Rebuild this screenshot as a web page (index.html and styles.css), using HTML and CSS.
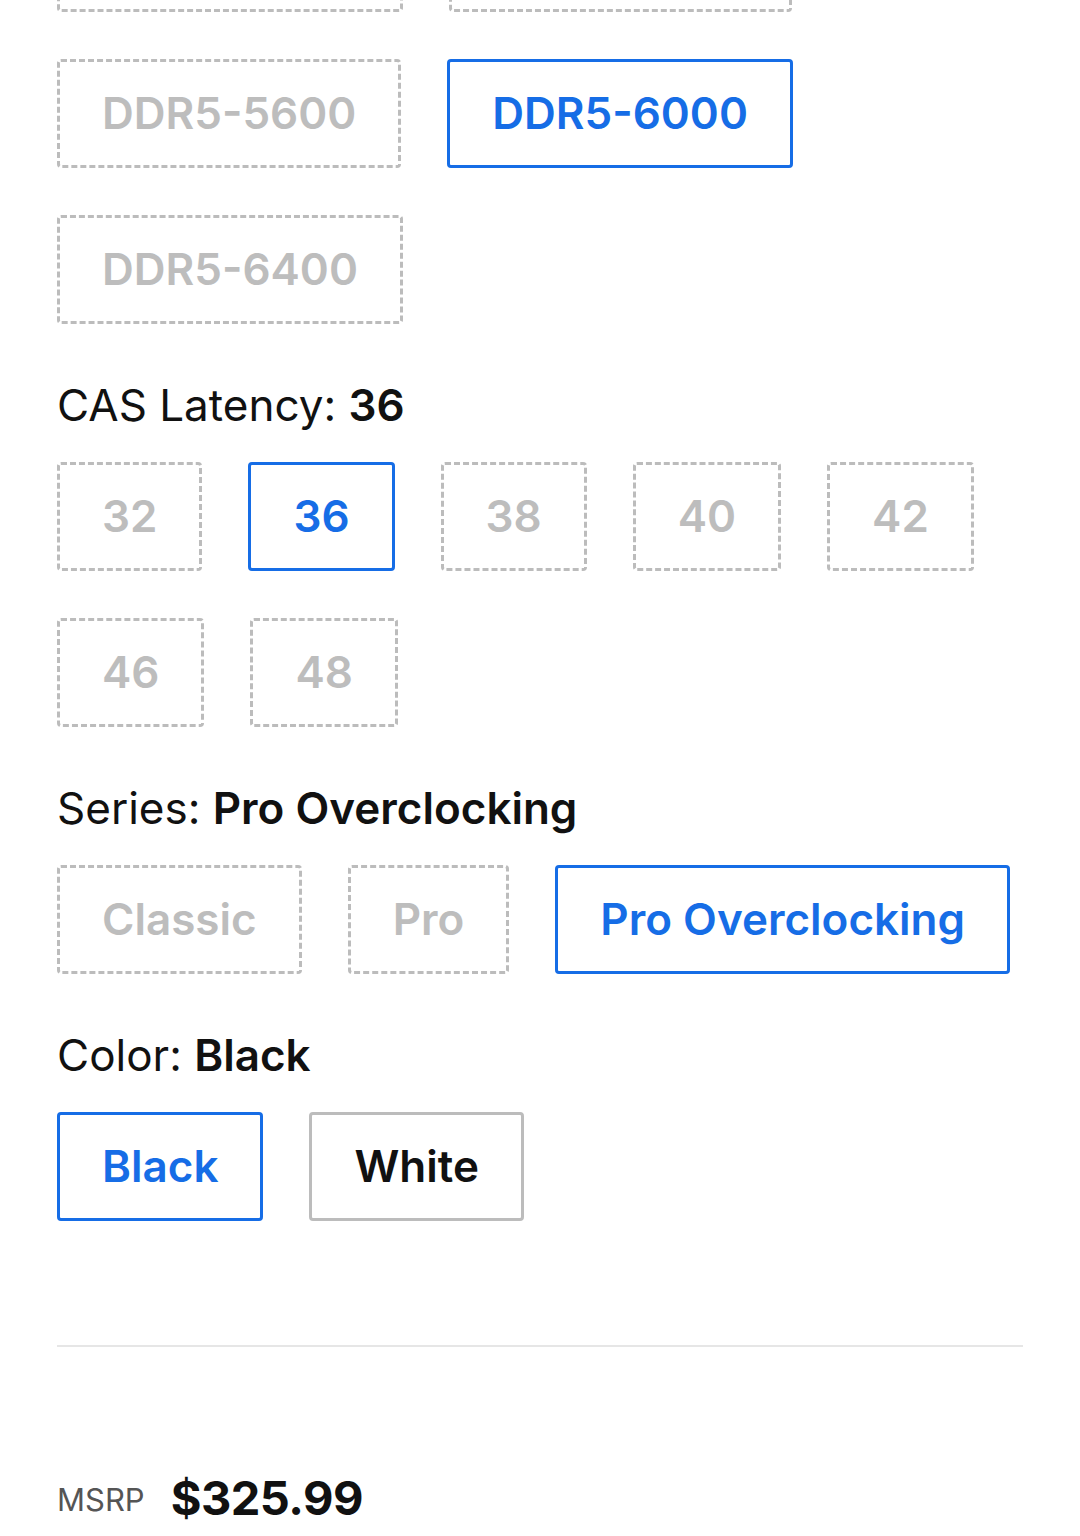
FILE: index.html
```html
<!DOCTYPE html>
<html lang="en">
<head>
  <meta charset="UTF-8" />
  <meta name="viewport" content="width=device-width, initial-scale=1.0" />
  <title>Memory Kit Options</title>
  <link rel="stylesheet" href="styles.css">
</head>
<body>
  <div class="product-options">
    <!-- Speed -->
    <div class="option-group first">
      <div class="swatches">
        <button class="swatch unavailable">DDR5-4800</button>
        <button class="swatch unavailable">DDR5-5200</button>
        <button class="swatch unavailable">DDR5-5600</button>
        <button class="swatch selected">DDR5-6000</button>
        <button class="swatch unavailable">DDR5-6400</button>
      </div>
    </div>

    <!-- CAS Latency -->
    <div class="option-group">
      <div class="option-label">CAS Latency: <strong>36</strong></div>
      <div class="swatches">
        <button class="swatch unavailable">32</button>
        <button class="swatch selected">36</button>
        <button class="swatch unavailable">38</button>
        <button class="swatch unavailable">40</button>
        <button class="swatch unavailable">42</button>
        <button class="swatch unavailable">46</button>
        <button class="swatch unavailable">48</button>
      </div>
    </div>

    <!-- Series -->
    <div class="option-group">
      <div class="option-label">Series: <strong>Pro Overclocking</strong></div>
      <div class="swatches">
        <button class="swatch unavailable">Classic</button>
        <button class="swatch unavailable">Pro</button>
        <button class="swatch selected">Pro Overclocking</button>
      </div>
    </div>

    <!-- Color -->
    <div class="option-group">
      <div class="option-label">Color: <strong>Black</strong></div>
      <div class="swatches">
        <button class="swatch selected">Black</button>
        <button class="swatch">White</button>
      </div>
    </div>

    <hr class="divider" />

    <div class="price-row">
      <span class="msrp">MSRP</span>
      <span class="price">$325.99</span>
    </div>
  </div>
</body>
</html>
```

FILE: styles.css
```css
/* Global Styles */
body {
  margin: 0;
  font-family: 'Inter', 'Liberation Sans', sans-serif;
  background: #fff;
  color: #111;
}
.product-options {
  padding: 0 57px 40px;
}
/* Option groups */
.option-group {
  margin-top: 54px;
}
.option-group.first {
  margin-top: -97px;
}
.option-label {
  font-size: 44px;
  font-weight: 400;
  margin-bottom: 30px;
}
.option-label strong {
  font-weight: 600;
}
.swatches {
  display: flex;
  flex-wrap: wrap;
  column-gap: 46px;
  row-gap: 47px;
  max-width: 966px;
}
/* Swatch buttons */
.swatch {
  font-family: inherit;
  font-size: 44px;
  font-weight: 600;
  line-height: 53px;
  padding: 25px 42px;
  background: #fff;
  color: #111;
  border: 3px solid #bcbcbc;
  border-radius: 4px;
  cursor: pointer;
}
.swatch.unavailable {
  color: #bdbdbd;
  border-style: dashed;
}
.swatch.selected {
  color: #166de6;
  border-color: #166de6;
}
/* Price */
.divider {
  border: none;
  height: 2px;
  background: #e6e6e6;
  margin: 124px 0 0;
}
.price-row {
  display: flex;
  align-items: baseline;
  gap: 26px;
  margin-top: 122px;
}
.msrp {
  font-size: 31px;
  color: #555;
  position: relative;
  top: -4px;
}
.price {
  font-size: 47px;
  font-weight: 700;
  letter-spacing: -0.5px;
}
```
